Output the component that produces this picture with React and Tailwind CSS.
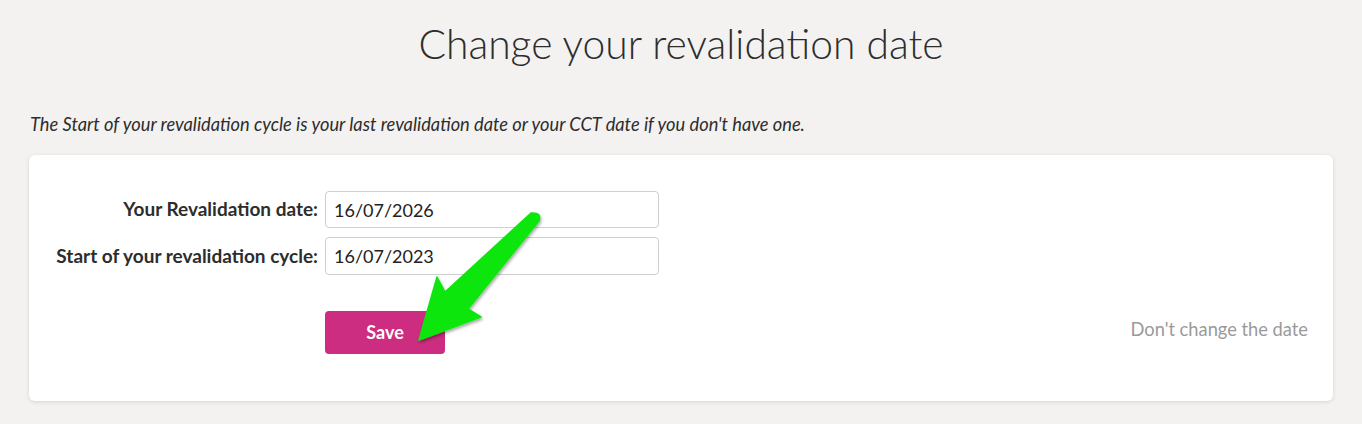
import React from 'react';

function Arrow() {
  return (
    <svg
      className="absolute left-0 top-0 pointer-events-none"
      width="1362"
      height="424"
      viewBox="0 0 1362 424"
    >
      <defs>
        <filter id="arrowShadow" x="-20%" y="-20%" width="140%" height="140%">
          <feDropShadow dx="1" dy="2" stdDeviation="1.5" floodColor="#000" floodOpacity="0.35" />
        </filter>
      </defs>
      <path
        d="M531 213 L445 292 L437 277 L419 340 L481 317 L468 309 L539 221 Q542 212 531 213 Z"
        fill="#0ee60e"
        stroke="#0ee60e"
        strokeWidth="1.5"
        strokeLinejoin="round"
        filter="url(#arrowShadow)"
      />
    </svg>
  );
}

export default function App() {
  return (
    <div
      className="relative w-[1362px] h-[424px] bg-[#f3f2f0] text-[#333] overflow-hidden"
      style={{ fontFamily: 'Lato, "Open Sans", sans-serif' }}
    >
      <h1 className="pt-[18px] text-center text-[40.8px] leading-[52px] font-light text-[#2d2d2d]">
        Change your revalidation date
      </h1>

      <p className="mt-[43px] px-[30px] text-[18.25px] leading-[22px] italic text-[#2d2d2d]">
        The Start of your revalidation cycle is your last revalidation date or your CCT date if you don't have one.
      </p>

      <div className="mx-[29px] mt-[20px] h-[246px] rounded-md bg-white shadow-[0_1px_4px_rgba(0,0,0,0.12)] pt-[36px] pr-[25px]">
        <div className="grid grid-cols-[289px_334px] gap-x-[7px] gap-y-[9px] items-center">
          <label className="text-right text-[19px] font-bold text-[#2d2d2d]">Your Revalidation date:</label>
          <input
            readOnly
            value="16/07/2026"
            className="h-[37px] rounded border border-[#cfcfcf] px-[8px] text-[18px] text-[#222] outline-none"
          />
          <label className="text-right text-[19px] font-bold text-[#2d2d2d]">Start of your revalidation cycle:</label>
          <input
            readOnly
            value="16/07/2023"
            className="h-[38px] rounded border border-[#cfcfcf] px-[8px] text-[18px] text-[#222] outline-none"
          />
        </div>

        <div className="mt-[36px] flex items-center">
          <div className="w-[296px]" />
          <button className="w-[120px] h-[43px] rounded bg-[#cc2d80] text-white text-[18px] font-bold">
            Save
          </button>
          <a className="ml-auto text-[18.3px] text-[#9a9a9a] -mt-[6px]">Don't change the date</a>
        </div>
      </div>

      <Arrow />
    </div>
  );
}
